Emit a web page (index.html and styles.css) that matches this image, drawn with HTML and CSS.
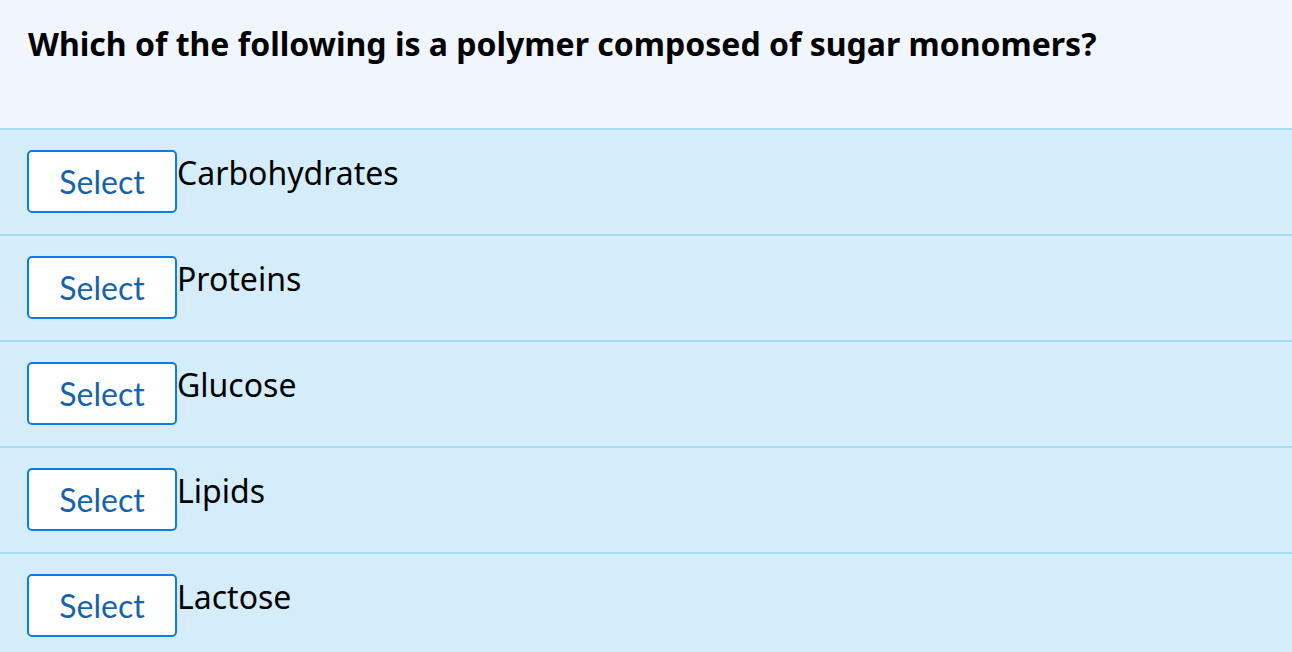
FILE: index.html
```html
<!DOCTYPE html>
<html>
<head>
<meta charset="utf-8">
<link rel="stylesheet" href="styles.css">
</head>
<body>
<div class="quiz">
  <div class="question">Which of the following is a polymer composed of sugar monomers?</div>
  <div class="options">
    <div class="option"><button class="select">Select</button><span class="label">Carbohydrates</span></div>
    <div class="option"><button class="select">Select</button><span class="label">Proteins</span></div>
    <div class="option"><button class="select">Select</button><span class="label">Glucose</span></div>
    <div class="option"><button class="select">Select</button><span class="label">Lipids</span></div>
    <div class="option"><button class="select">Select</button><span class="label">Lactose</span></div>
  </div>
</div>
</body>
</html>
```

FILE: styles.css
```css
html, body {
  margin: 0;
  padding: 0;
}
body {
  font-family: "Noto Sans", "Open Sans", sans-serif;
  background: #d5ecfa;
  color: #000;
}
.question {
  background: #f0f6fb;
  height: 130px;
  box-sizing: border-box;
  padding: 22px 28px 0;
  font-size: 32px;
  font-weight: 700;
  line-height: 44px;
  border-bottom: 2px solid #a3dbf7;
}
.option {
  display: flex;
  align-items: flex-start;
  height: 106px;
  box-sizing: border-box;
  padding: 20px 0 0 27px;
  border-bottom: 2px solid #a3dbf7;
}
.select {
  width: 150px;
  height: 63px;
  box-sizing: border-box;
  background: #fff;
  border: 2px solid #0b7be6;
  border-radius: 5px;
  font-family: Lato, sans-serif;
  font-size: 32px;
  color: #1562ae;
  padding: 0 0 1px;
  margin: 0;
}
.label {
  font-size: 32px;
  line-height: 46px;
}
```
